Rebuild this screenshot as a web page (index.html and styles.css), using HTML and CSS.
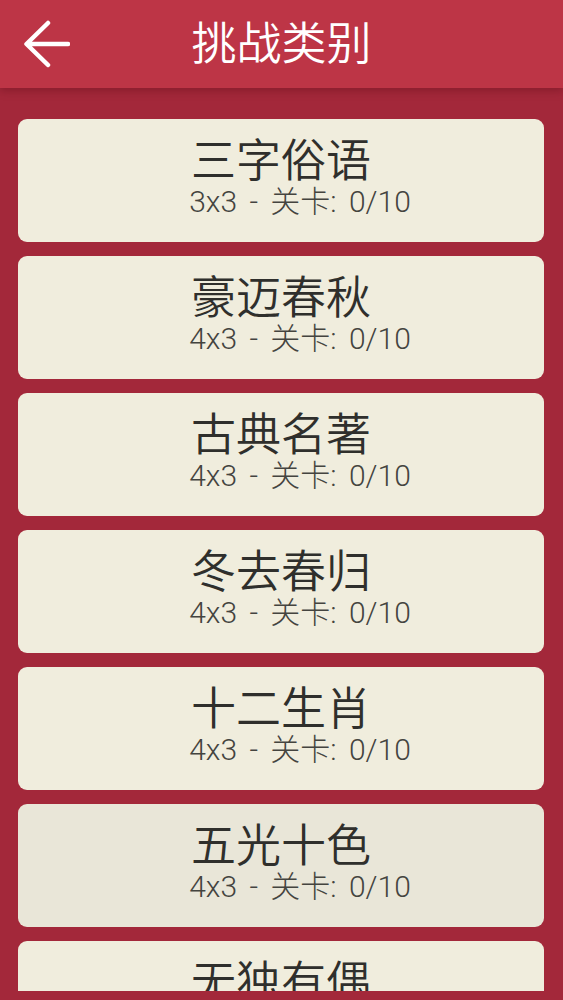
FILE: index.html
```html
<!DOCTYPE html>
<html lang="zh">
<head>
<meta charset="utf-8">
<title>挑战类别</title>
<link rel="stylesheet" href="styles.css">
</head>
<body>
<div class="screen">
  <header class="appbar">
    <button class="back" aria-label="返回">
      <svg width="48" height="48" viewBox="0 0 48 48">
        <path d="M46 24H5M26 3L4.5 24L26 45" fill="none" stroke="#fff" stroke-width="4.5" stroke-linecap="round" stroke-linejoin="round"/>
      </svg>
    </button>
    <h1 class="title">挑战类别</h1>
  </header>
  <main class="list">
    <div class="card"><div class="name">三字俗语</div><div class="meta">3x3 - 关卡: 0/10</div></div>
    <div class="card"><div class="name">豪迈春秋</div><div class="meta">4x3 - 关卡: 0/10</div></div>
    <div class="card"><div class="name">古典名著</div><div class="meta">4x3 - 关卡: 0/10</div></div>
    <div class="card"><div class="name">冬去春归</div><div class="meta">4x3 - 关卡: 0/10</div></div>
    <div class="card"><div class="name">十二生肖</div><div class="meta">4x3 - 关卡: 0/10</div></div>
    <div class="card pressed"><div class="name">五光十色</div><div class="meta">4x3 - 关卡: 0/10</div></div>
    <div class="card"><div class="name">无独有偶</div><div class="meta">4x3 - 关卡: 0/10</div></div>
  </main>
</div>
</body>
</html>
```

FILE: styles.css
```css
* { box-sizing: border-box; }
html, body {
  margin: 0;
  padding: 0;
  background: #a3283a;
}
body {
  font-family: Roboto, "Noto Sans CJK SC", sans-serif;
}
.screen {
  width: 563px;
  height: 1000px;
  display: flex;
  flex-direction: column;
  background: #a3283a;
  overflow: hidden;
}
.appbar {
  position: relative;
  height: 88px;
  flex: 0 0 88px;
  background: #bd3546;
  display: flex;
  align-items: center;
  justify-content: center;
  box-shadow: 0 3px 8px rgba(90, 10, 20, 0.35);
  z-index: 1;
}
.back {
  position: absolute;
  left: 22px;
  top: 20px;
  width: 48px;
  height: 48px;
  padding: 0;
  border: 0;
  background: none;
  display: block;
}
.back svg { display: block; }
.title {
  margin: 0 0 6px 0;
  color: #fff;
  font-family: "Noto Sans CJK SC", sans-serif;
  font-weight: 350;
  font-size: 45px;
  line-height: 50px;
}
.list {
  height: 903px;
  flex: 0 0 903px;
  overflow: hidden;
  padding: 31px 19px 0 18px;
  display: flex;
  flex-direction: column;
  gap: 14px;
}
.card {
  flex: 0 0 123px;
  height: 123px;
  background: #f0eddd;
  border-radius: 9px;
  display: flex;
  flex-direction: column;
  align-items: center;
  padding-top: 16px;
}
.card.pressed { background: #e9e6d8; }
.name {
  font-family: "Noto Sans CJK SC", sans-serif;
  font-weight: 350;
  font-size: 45px;
  line-height: 46px;
  color: #2f2f2c;
}
.meta {
  margin-top: 5px;
  font-family: Roboto, "Noto Sans CJK SC", sans-serif;
  font-weight: 300;
  font-size: 30px;
  line-height: 32px;
  word-spacing: 5px;
  padding-left: 38px;
  color: #44443f;
}
```
